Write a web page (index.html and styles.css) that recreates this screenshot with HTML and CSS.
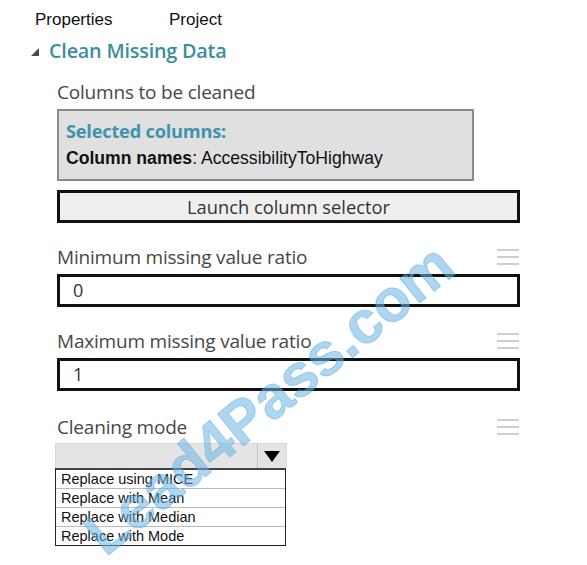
FILE: index.html
```html
<!DOCTYPE html>
<html>
<head>
<meta charset="utf-8">
<link rel="stylesheet" href="styles.css">
</head>
<body>
<div class="page">
  <div class="tabs">
    <span class="tab tab-props">Properties</span>
    <span class="tab">Project</span>
  </div>
  <div class="heading">
    <svg class="caret" width="10" height="10" viewBox="0 0 10 10"><polygon points="9,1 9,9 1,9" fill="#4a4a4a"/></svg>
    <span class="heading-text">Clean Missing Data</span>
  </div>
  <div class="fields">
    <div class="label-row"><span class="label">Columns to be cleaned</span></div>
    <div class="selbox">
      <div class="sel-title">Selected columns:</div>
      <div class="sel-names"><b>Column names</b>: AccessibilityToHighway</div>
    </div>
    <div class="button">Launch column selector</div>

    <div class="label-row gap1">
      <span class="label">Minimum missing value ratio</span>
      <span class="menu"><i></i><i></i><i></i></span>
    </div>
    <div class="input">0</div>

    <div class="label-row gap2">
      <span class="label">Maximum missing value ratio</span>
      <span class="menu"><i></i><i></i><i></i></span>
    </div>
    <div class="input">1</div>

    <div class="label-row gap3">
      <span class="label">Cleaning mode</span>
      <span class="menu"><i></i><i></i><i></i></span>
    </div>
    <div class="dropdown">
      <div class="dd-value"></div>
      <div class="dd-arrow"><svg width="16" height="11" viewBox="0 0 16 11"><polygon points="0,0 16,0 8,11" fill="#000"/></svg></div>
    </div>
    <div class="options">
      <div class="opt">Replace using MICE</div>
      <div class="opt">Replace with Mean</div>
      <div class="opt">Replace with Median</div>
      <div class="opt">Replace with Mode</div>
    </div>
  </div>
  <div class="watermark">Lead4Pass.com</div>
</div>
</body>
</html>
```
FILE: styles.css
```css
html, body {
  margin: 0;
  padding: 0;
  background: #fff;
}
.page {
  position: relative;
  width: 587px;
  height: 565px;
  overflow: hidden;
  font-family: "Open Sans", "Noto Sans", sans-serif;
  color: #444;
}
.tabs {
  display: flex;
  padding: 9px 0 0 35px;
  height: 22px;
  font-family: "Liberation Sans", Arial, sans-serif;
  font-size: 17px;
  color: #111;
  line-height: 22px;
}
.tab-props {
  width: 134px;
}
.heading {
  display: flex;
  align-items: center;
  padding: 5px 0 0 30px;
  height: 28px;
}
.caret {
  margin-right: 9px;
  margin-top: 3px;
}
.heading-text {
  font-size: 19.8px;
  font-weight: 600;
  color: #3b8d9f;
  letter-spacing: -0.2px;
}
.fields {
  padding: 0 0 0 57px;
  width: 463px;
}
.label-row {
  display: flex;
  justify-content: space-between;
  align-items: center;
  height: 27px;
  margin-top: 14px;
}
.label-row.gap1 { margin-top: 20px; }
.label-row.gap2 { margin-top: 20px; }
.label-row.gap3 { margin-top: 22px; }
.label {
  font-size: 19px;
  color: #474747;
  letter-spacing: -0.2px;
}
.menu {
  display: flex;
  flex-direction: column;
  gap: 5px;
  width: 22px;
  margin-right: 1px;
  margin-top: 0;
}
.menu i {
  display: block;
  height: 2px;
  background: #cdcdcd;
}
.selbox {
  margin-top: 4px;
  width: 406px;
  height: 68px;
  background: #e0e0e0;
  border: 2px solid #8a8a8a;
  padding: 0 0 0 7px;
  box-sizing: content-box;
}
.sel-title {
  margin-top: 8px;
  font-size: 18.2px;
  font-weight: 700;
  color: #3f93ad;
  height: 25px;
  letter-spacing: -0.2px;
}
.sel-names {
  margin-top: 4px;
  font-family: "Liberation Sans", Arial, sans-serif;
  font-size: 17.6px;
  color: #111;
}
.sel-names b {
  font-weight: 700;
}
.button {
  margin-top: 9px;
  height: 27px;
  border: 3px solid #111;
  background: #efefef;
  text-align: center;
  font-size: 18.3px;
  line-height: 27px;
  color: #333;
}
.input {
  margin-top: 4px;
  height: 27px;
  border: 3px solid #111;
  background: #fff;
  font-size: 18px;
  line-height: 27px;
  padding-left: 13px;
  color: #333;
}
.dropdown {
  margin-top: 3px;
  margin-left: -2px;
  width: 230px;
  height: 24px;
  display: flex;
  border: 1px solid #d8d8d8;
  border-bottom: none;
  background: #e4e4e4;
}
.dd-value {
  flex: 1;
}
.dd-arrow {
  width: 28px;
  border-left: 1px solid #c4c4c4;
  display: flex;
  align-items: center;
  justify-content: center;
}
.options {
  margin-left: -2px;
  width: 229px;
  border: 1px solid #222;
  border-top: 2px solid #444;
  font-family: "Liberation Sans", Arial, sans-serif;
  font-size: 14.5px;
  color: #111;
}
.opt {
  height: 18px;
  line-height: 18px;
  padding-left: 5px;
  border-bottom: 1px solid #bbb;
}
.opt:last-child {
  border-bottom: none;
}
.watermark {
  position: absolute;
  left: 93px;
  top: 512px;
  height: 60px;
  line-height: 60px;
  transform: rotate(-39deg);
  transform-origin: 0 50%;
  font-family: "Liberation Sans", Arial, sans-serif;
  font-weight: 700;
  font-size: 60px;
  color: rgba(105, 182, 228, 0.55);
  -webkit-text-stroke: 1px rgba(70, 150, 210, 0.35);
  white-space: nowrap;
  pointer-events: none;
}
```
